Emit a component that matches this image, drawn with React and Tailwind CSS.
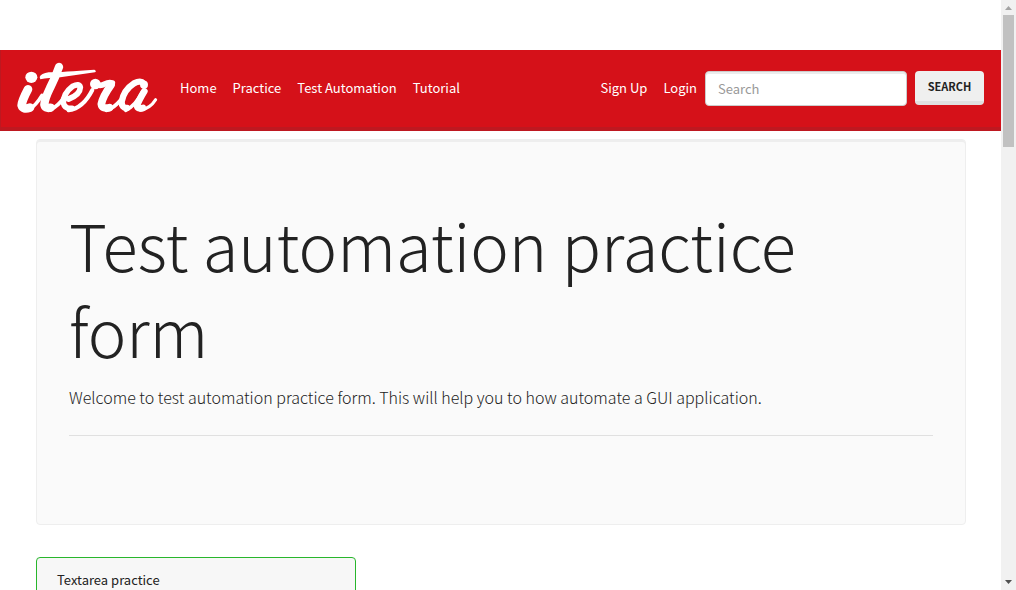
const navLinks = ["Home", "Practice", "Test Automation", "Tutorial"];
const accountLinks = ["Sign Up", "Login"];

function Logo() {
  return (
    <svg
      viewBox="48 52 426 156"
      className="h-[52px] w-[142px] shrink-0"
      fill="none"
      stroke="#fff"
      strokeLinecap="round"
      strokeLinejoin="round"
      aria-hidden="true"
    >
      <ellipse cx="94" cy="98" rx="18" ry="17" fill="#fff" stroke="none" />
      <path d="M84 134Q66 168 65 182Q69 196 90 189" strokeWidth="26" />
      <path d="M86 196Q108 182 126 152" strokeWidth="11" />
      <path d="M177 67Q166 99 150 130Q134 163 133 180Q135 193 152 189" strokeWidth="25" />
      <path d="M150 196Q176 184 192 158" strokeWidth="11" />
      <path d="M119 97Q123 86 146 83Q190 82 283 75Q291 79 285 83L181 98Q145 99 121 104Z" fill="#fff" stroke="none" />
      <path d="M206 163Q240 150 241 128Q238 115 218 125Q190 146 190 175Q195 194 216 191" strokeWidth="17" />
      <path d="M206 197Q250 190 277 136" strokeWidth="12" />
      <circle cx="286" cy="118" r="16" fill="#fff" stroke="none" />
      <path d="M287 118Q300 126 314 118Q326 112 337 115" strokeWidth="17" />
      <path d="M333 121Q309 154 304 178Q306 194 328 189" strokeWidth="23" />
      <path d="M320 197Q342 190 362 166" strokeWidth="11" />
      <path d="M431 116Q422 106 402 116Q371 136 365 171Q365 191 381 190" strokeWidth="19" />
      <circle cx="432" cy="120" r="12" fill="#fff" stroke="none" />
      <path d="M377 197Q406 184 427 142" strokeWidth="11" />
      <path d="M433 140Q416 168 411 183Q413 195 429 190" strokeWidth="20" />
      <path d="M421 197Q450 192 467 165" strokeWidth="9" />
    </svg>
  );
}

function ScrollBar() {
  return (
    <div className="flex w-[15px] shrink-0 flex-col items-center bg-[#f1f1f1]" aria-hidden="true">
      <svg className="h-[15px] w-[15px]" viewBox="0 0 15 15">
        <path d="M4 10L7.500 6L11 10Z" fill="#a3a3a3" />
      </svg>
      <div className="h-[132px] w-[11px] bg-[#c1c1c1]" />
      <svg className="mt-auto h-[15px] w-[15px]" viewBox="0 0 15 15">
        <path d="M4 5L7.500 9L11 5Z" fill="#505050" />
      </svg>
    </div>
  );
}

function NavLink({ children }) {
  return (
    <a href="#" className="px-2 py-2 text-white">
      {children}
    </a>
  );
}

export default function App() {
  return (
    <div className="flex h-screen overflow-hidden bg-white font-['Source_Sans_Pro','Noto_Sans_CJK_SC',sans-serif] text-[13px] leading-5 text-[#222]">
      <div className="min-w-0 flex-1 pt-[50px]">
        <header className="flex items-center justify-between border-b-4 border-l border-b-[#be1820] border-l-[#be1820] bg-[#d51119] pr-[17px] pb-px pl-[15px]">
          <div className="flex items-center">
            <a href="#" aria-label="itera" className="mr-[14px] py-3">
              <Logo />
            </a>
            <nav className="flex">
              {navLinks.map((label) => (
                <NavLink key={label}>{label}</NavLink>
              ))}
            </nav>
          </div>
          <div className="flex items-center">
            {accountLinks.map((label) => (
              <NavLink key={label}>{label}</NavLink>
            ))}
            <form className="flex gap-2" onSubmit={(event) => event.preventDefault()}>
              <input
                type="text"
                aria-label="Search"
                placeholder="Search"
                className="h-[35px] w-[202px] rounded-sm border border-[#ccc] bg-white px-3 shadow-[inset_0_2px_0_rgba(0,0,0,0.075)] outline-none placeholder:text-[#999]"
              />
              <button
                type="submit"
                className="h-[34px] w-[69px] rounded-sm border-b-4 border-[#e0e0e0] bg-[#efefef] text-[11px] font-bold text-[#222]"
              >
                SEARCH
              </button>
            </form>
          </div>
        </header>
        <main className="pt-2 pr-[35px] pl-9">
          <section className="rounded border border-[#eee] bg-[#fafafa] px-8 pt-[61px] pb-[88px] shadow-[inset_0_2px_0_#eee]">
            <h1 className="text-[65px] leading-[86px] font-light">
              Test automation practice form
            </h1>
            <p className="mt-[10px] text-[16px] leading-7 font-light">
              Welcome to test automation practice form. This will help you to how automate a GUI
              application.
            </p>
            <hr className="mt-6 border-[#e0e0e0]" />
          </section>
          <section className="mt-8 w-80 rounded border border-[#28b62c] bg-[#f7f7f7]">
            <h2 className="px-5 py-3">Textarea practice</h2>
            <div className="h-40 bg-white" />
          </section>
        </main>
      </div>
      <ScrollBar />
    </div>
  );
}
